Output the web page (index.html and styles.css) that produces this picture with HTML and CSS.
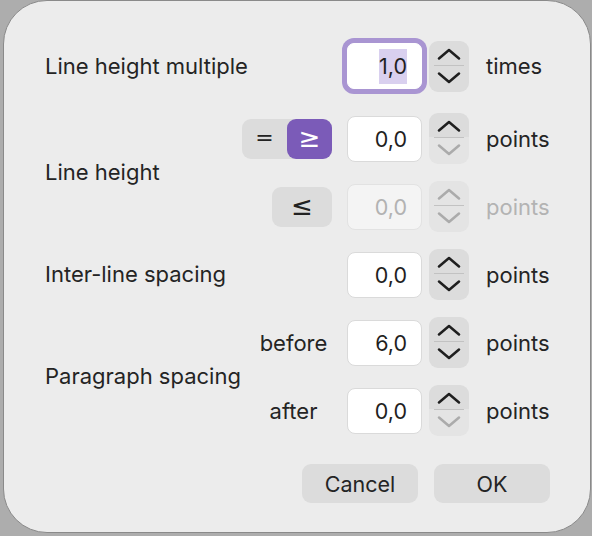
FILE: index.html
```html
<!DOCTYPE html>
<html>
<head>
<meta charset="utf-8">
<link rel="stylesheet" href="styles.css">
</head>
<body>
<div class="dialog">
  <div class="form">
    <div class="label row1 first">Line height multiple</div>
    <div class="field focused row1 colf first"><span class="sel">1,0</span></div>
    <div class="stepper row1 first">
      <div class="half up"><svg viewBox="0 0 24 12"><path d="M2 10.5 L12 2 L22 10.5"/></svg></div>
      <div class="half down"><svg viewBox="0 0 24 12"><path d="M2 1.5 L12 10 L22 1.5"/></svg></div>
    </div>
    <div class="unit row1 first">times</div>

    <div class="label span23">Line height</div>
    <div class="seg row2"><span class="segitem">=</span><span class="segitem big on">≥</span></div>
    <div class="field row2 colf">0,0</div>
    <div class="stepper row2">
      <div class="half up"><svg viewBox="0 0 24 12"><path d="M2 10.5 L12 2 L22 10.5"/></svg></div>
      <div class="half down off"><svg viewBox="0 0 24 12"><path d="M2 1.5 L12 10 L22 1.5"/></svg></div>
    </div>
    <div class="unit row2">points</div>

    <div class="segbtn big row3">≤</div>
    <div class="field disabled row3 colf">0,0</div>
    <div class="stepper row3">
      <div class="half up off"><svg viewBox="0 0 24 12"><path d="M2 10.5 L12 2 L22 10.5"/></svg></div>
      <div class="half down off"><svg viewBox="0 0 24 12"><path d="M2 1.5 L12 10 L22 1.5"/></svg></div>
    </div>
    <div class="unit disabled-text row3">points</div>

    <div class="label row4">Inter-line spacing</div>
    <div class="field row4 colf">0,0</div>
    <div class="stepper row4">
      <div class="half up"><svg viewBox="0 0 24 12"><path d="M2 10.5 L12 2 L22 10.5"/></svg></div>
      <div class="half down"><svg viewBox="0 0 24 12"><path d="M2 1.5 L12 10 L22 1.5"/></svg></div>
    </div>
    <div class="unit row4">points</div>

    <div class="label span56">Paragraph spacing</div>
    <div class="sublabel row5">before</div>
    <div class="field row5 colf">6,0</div>
    <div class="stepper row5">
      <div class="half up"><svg viewBox="0 0 24 12"><path d="M2 10.5 L12 2 L22 10.5"/></svg></div>
      <div class="half down"><svg viewBox="0 0 24 12"><path d="M2 1.5 L12 10 L22 1.5"/></svg></div>
    </div>
    <div class="unit row5">points</div>

    <div class="sublabel row6">after</div>
    <div class="field row6 colf">0,0</div>
    <div class="stepper row6">
      <div class="half up"><svg viewBox="0 0 24 12"><path d="M2 10.5 L12 2 L22 10.5"/></svg></div>
      <div class="half down off"><svg viewBox="0 0 24 12"><path d="M2 1.5 L12 10 L22 1.5"/></svg></div>
    </div>
    <div class="unit row6">points</div>
  </div>
  <div class="buttons">
    <div class="btn">Cancel</div>
    <div class="btn">OK</div>
  </div>
</div>
</body>
</html>
```

FILE: styles.css
```css
html, body {
  margin: 0;
  padding: 0;
}
body {
  width: 592px;
  height: 536px;
  overflow: hidden;
  background: #adadad;
  font-family: Inter, "Noto Sans", sans-serif;
  color: #242424;
}
.dialog {
  margin-left: 3px;
  width: 588px;
  height: 533px;
  box-sizing: border-box;
  border: 1px solid #8a8a8a;
  border-radius: 44px;
  background: #ececec;
  padding: 40px 40px 0 41px;
}
.form {
  display: grid;
  grid-template-columns: 197px 90px 90px 47px auto;
  grid-template-rows: 55px repeat(5, 51px);
  row-gap: 17px;
  align-items: center;
}
.first { align-self: start; }
.row1 { grid-row: 1; }
.row2 { grid-row: 2; }
.row3 { grid-row: 3; }
.row4 { grid-row: 4; }
.row5 { grid-row: 5; }
.row6 { grid-row: 6; }
.span23 { grid-row: 2 / 4; }
.span56 { grid-row: 5 / 7; }

.label {
  grid-column: 1 / 3;
  font-size: 22px;
  line-height: 51px;
  height: 51px;
}
.sublabel {
  grid-column: 2;
  font-size: 22px;
  text-align: center;
  padding-left: 13px;
}
.field {
  grid-column: 3;
  justify-self: end;
  width: 75px;
  height: 46px;
  box-sizing: border-box;
  border: 1px solid #dadada;
  border-radius: 8px;
  background: #fff;
  text-align: right;
  padding-right: 14px;
  font-size: 21.5px;
  line-height: 44px;
  color: #1f1f1f;
}
.field.first { margin-top: 2px; }
.field.focused {
  border-color: #fff;
  box-shadow: 0 0 0 5px #a995d2;
  border-radius: 7px;
}
.sel {
  background: #d9d0ef;
  padding: 4px 0 5px;
}
.field.disabled {
  background: #f4f4f4;
  border-color: #e2e2e2;
  color: #b2b2b2;
}
.stepper {
  grid-column: 4;
  justify-self: end;
  width: 40px;
  height: 51px;
  border-radius: 9px;
  overflow: hidden;
  display: flex;
  flex-direction: column;
  position: relative;
}
.stepper::after {
  content: "";
  position: absolute;
  left: 5px;
  right: 5px;
  top: 24px;
  height: 1px;
  background: #c2c2c2;
}
.half {
  display: flex;
  align-items: center;
  justify-content: center;
  background: #dcdcdc;
}
.half.up { height: 24px; }
.half.down { height: 27px; }
.half.off { background: #e4e4e4; }
.half svg {
  width: 24px;
  height: 12px;
  fill: none;
  stroke: #1f1f1f;
  stroke-width: 2.5;
  stroke-linecap: round;
  stroke-linejoin: round;
}
.half.up svg { margin-top: 2px; }
.half.down svg { margin-bottom: 2px; }
.half.off svg { stroke: #ababab; }

.unit {
  grid-column: 5;
  padding-left: 17px;
  font-size: 22px;
}
.unit.first { line-height: 51px; }
.disabled-text { color: #b3b3b3; }

.seg {
  grid-column: 2;
  justify-self: end;
  width: 90px;
  height: 40px;
  border-radius: 9px;
  background: #dcdcdc;
  display: flex;
}
.segitem {
  flex: 1;
  display: flex;
  align-items: center;
  justify-content: center;
  font-family: "DejaVu Sans", sans-serif;
  font-size: 22px;
  color: #222;
  border-radius: 9px;
  padding-bottom: 2px;
}
.segitem.on {
  background: #7b5bb8;
  color: #fff;
}
.segbtn {
  grid-column: 2;
  justify-self: end;
  width: 60px;
  height: 40px;
  border-radius: 9px;
  background: #dcdcdc;
  display: flex;
  align-items: center;
  justify-content: center;
  font-family: "DejaVu Sans", sans-serif;
  color: #222;
  box-sizing: border-box;
  padding-bottom: 2px;
}
.big {
  font-size: 26px;
}
.buttons {
  display: flex;
  justify-content: flex-end;
  gap: 16px;
  margin-top: 28px;
}
.btn {
  width: 116px;
  height: 39px;
  border-radius: 9px;
  background: #dcdcdc;
  display: flex;
  align-items: center;
  justify-content: center;
  font-size: 21.5px;
  color: #242424;
}
```
